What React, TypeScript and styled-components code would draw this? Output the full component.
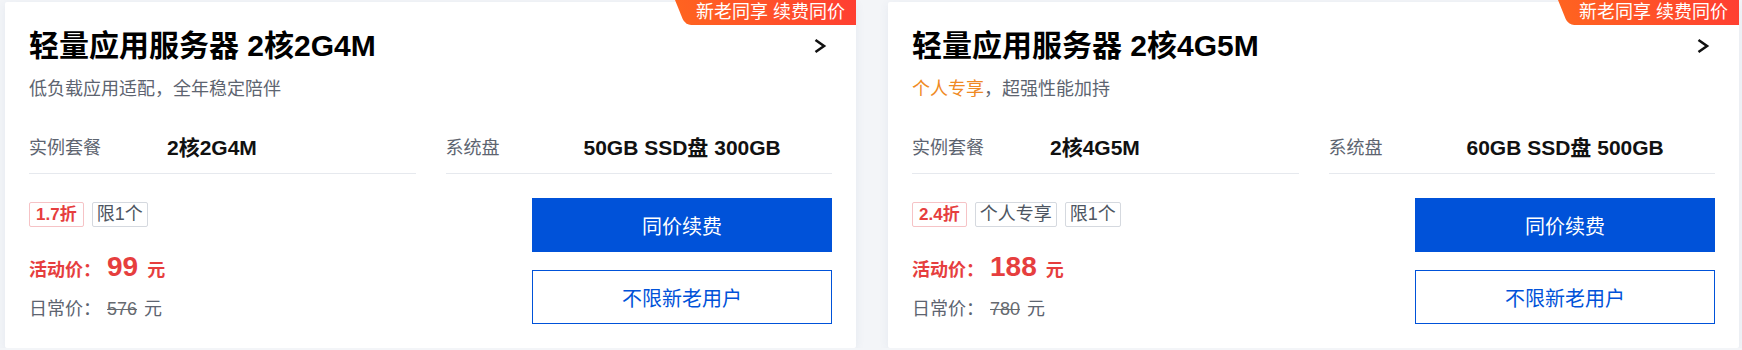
import React, {FC} from "react";
import styled, {createGlobalStyle} from "styled-components";

const colors = {
    page: "#f3f5f8",
    white: "#ffffff",
    title: "#000000",
    text: "#111111",
    gray: "#5d6470",
    line: "#e6e9ee",
    red: "#e63e3e",
    orange: "#ef8a24",
    blue: "#0052d9",
    tagGray: "#d5d9df",
    tagRed: "#f6c3c6",
};

const GlobalStyle = createGlobalStyle`
  body {
    margin: 0;
    background: ${colors.page};
    font-family: "Liberation Sans", "Noto Sans CJK SC", sans-serif;
  }
`;

const Page = styled.div`
  display: flex;
  gap: 32px;
  padding: 2px 0 0 5px;
`;

const Card = styled.div`
  position: relative;
  width: 851px;
  box-sizing: border-box;
  padding: 23px 24px 24px;
  background: ${colors.white};
  border-radius: 2px;
  box-shadow: 0 2px 10px rgba(60, 90, 140, 0.08);
`;

const Badge = styled.div`
  position: absolute;
  top: -2px;
  right: 0;
  height: 25px;
  padding: 0 11px 0 21px;
  overflow: hidden;
  color: ${colors.white};
  font-size: 18px;
  line-height: 25px;
  white-space: nowrap;

  &::before {
    content: "";
    position: absolute;
    inset: 0;
    z-index: 0;
    background: linear-gradient(90deg, #ff6320, #ff3e32);
    border-bottom-left-radius: 6px;
    transform: skewX(22deg);
    transform-origin: top left;
  }
`;

const BadgeText = styled.span`
  position: relative;
`;

const TitleRow = styled.div`
  display: flex;
  align-items: center;
  justify-content: space-between;
  height: 42px;
`;

const Title = styled.div`
  color: ${colors.title};
  font-size: 30px;
  font-weight: 700;
  line-height: 42px;
`;

const Arrow = styled.svg`
  width: 14px;
  height: 16px;
  margin-right: 5px;
`;

const Subtitle = styled.div`
  margin-top: 9px;
  color: ${colors.gray};
  font-size: 18px;
  line-height: 26px;
`;

const Highlight = styled.span`
  color: ${colors.orange};
`;

const Specs = styled.div`
  display: grid;
  grid-template-columns: 1fr 1fr;
  column-gap: 30px;
  margin-top: 32px;
`;

const SpecItem = styled.div`
  display: flex;
  align-items: center;
  padding-bottom: 11px;
  border-bottom: 1px solid ${colors.line};
  line-height: 28px;
`;

const SpecLabel = styled.div`
  width: 138px;
  flex-shrink: 0;
  color: ${colors.gray};
  font-size: 18px;
`;

const SpecValue = styled.div`
  color: ${colors.text};
  font-size: 21px;
  font-weight: 700;
`;

const Bottom = styled.div`
  display: flex;
  justify-content: space-between;
  margin-top: 24px;
`;

const PriceBox = styled.div`
  padding-top: 4px;
`;

const Tags = styled.div`
  display: flex;
  gap: 8px;
`;

const Tag = styled.span<{ $hot?: boolean }>`
  height: 25px;
  box-sizing: border-box;
  padding: 0 ${p => p.$hot ? 6 : 4}px;
  border: 1px solid ${p => p.$hot ? colors.tagRed : colors.tagGray};
  border-radius: 2px;
  color: ${p => p.$hot ? colors.red : "#4d5562"};
  font-size: ${p => p.$hot ? 17 : 18}px;
  font-weight: ${p => p.$hot ? 700 : 400};
  line-height: 23px;
`;

const ActivePrice = styled.div`
  display: flex;
  align-items: baseline;
  margin-top: 26px;
  color: ${colors.red};
  font-weight: 700;
  line-height: 1;
`;

const PriceLabel = styled.span`
  font-size: 18px;
`;

const PriceNumber = styled.span`
  margin-left: 6px;
  font-size: 28px;
`;

const PriceUnit = styled.span<{ $muted?: boolean }>`
  margin-left: ${p => p.$muted ? 7 : 9}px;
  font-size: 18px;
`;

const RegularPrice = styled.div`
  display: flex;
  align-items: baseline;
  margin-top: 19px;
  color: ${colors.gray};
  font-size: 18px;
  line-height: 1;
`;

const OldNumber = styled.span`
  margin-left: 6px;
  color: #666a70;
  text-decoration: line-through;
`;

const Actions = styled.div`
  display: flex;
  flex-direction: column;
  gap: 18px;
`;

const Button = styled.button<{ $primary?: boolean }>`
  width: 300px;
  height: 54px;
  border: 1px solid ${colors.blue};
  border-radius: 0;
  background: ${p => p.$primary ? colors.blue : colors.white};
  color: ${p => p.$primary ? colors.white : colors.blue};
  font-family: inherit;
  font-size: 20px;
  cursor: pointer;
`;

interface IPlan {
    spec: string;
    subtitle: React.ReactNode;
    disk: string;
    discount: string;
    tags: string[];
    price: number;
    oldPrice: number;
}

const plans: IPlan[] = [
    {
        spec: "2核2G4M",
        subtitle: "低负载应用适配，全年稳定陪伴",
        disk: "50GB SSD盘 300GB",
        discount: "1.7折",
        tags: ["限1个"],
        price: 99,
        oldPrice: 576,
    },
    {
        spec: "2核4G5M",
        subtitle: <><Highlight>个人专享</Highlight>，超强性能加持</>,
        disk: "60GB SSD盘 500GB",
        discount: "2.4折",
        tags: ["个人专享", "限1个"],
        price: 188,
        oldPrice: 780,
    },
];

const PlanCard: FC<{ plan: IPlan }> = ({plan}) => (
    <Card>
        <Badge><BadgeText>新老同享 续费同价</BadgeText></Badge>
        <TitleRow>
            <Title>轻量应用服务器 {plan.spec}</Title>
            <Arrow viewBox="0 0 14 16" fill="none">
                <polyline points="2.5,2 11,8 2.5,14" stroke="#111" strokeWidth="2.6" strokeLinejoin="miter"/>
            </Arrow>
        </TitleRow>
        <Subtitle>{plan.subtitle}</Subtitle>
        <Specs>
            <SpecItem>
                <SpecLabel>实例套餐</SpecLabel>
                <SpecValue>{plan.spec}</SpecValue>
            </SpecItem>
            <SpecItem>
                <SpecLabel>系统盘</SpecLabel>
                <SpecValue>{plan.disk}</SpecValue>
            </SpecItem>
        </Specs>
        <Bottom>
            <PriceBox>
                <Tags>
                    <Tag $hot>{plan.discount}</Tag>
                    {plan.tags.map(t => <Tag key={t}>{t}</Tag>)}
                </Tags>
                <ActivePrice>
                    <PriceLabel>活动价：</PriceLabel>
                    <PriceNumber>{plan.price}</PriceNumber>
                    <PriceUnit>元</PriceUnit>
                </ActivePrice>
                <RegularPrice>
                    <span>日常价：</span>
                    <OldNumber>{plan.oldPrice}</OldNumber>
                    <PriceUnit $muted>元</PriceUnit>
                </RegularPrice>
            </PriceBox>
            <Actions>
                <Button $primary>同价续费</Button>
                <Button>不限新老用户</Button>
            </Actions>
        </Bottom>
    </Card>
);

const App: FC = () => (
    <>
        <GlobalStyle/>
        <Page>
            {plans.map(p => <PlanCard key={p.spec} plan={p}/>)}
        </Page>
    </>
);

export default App;
